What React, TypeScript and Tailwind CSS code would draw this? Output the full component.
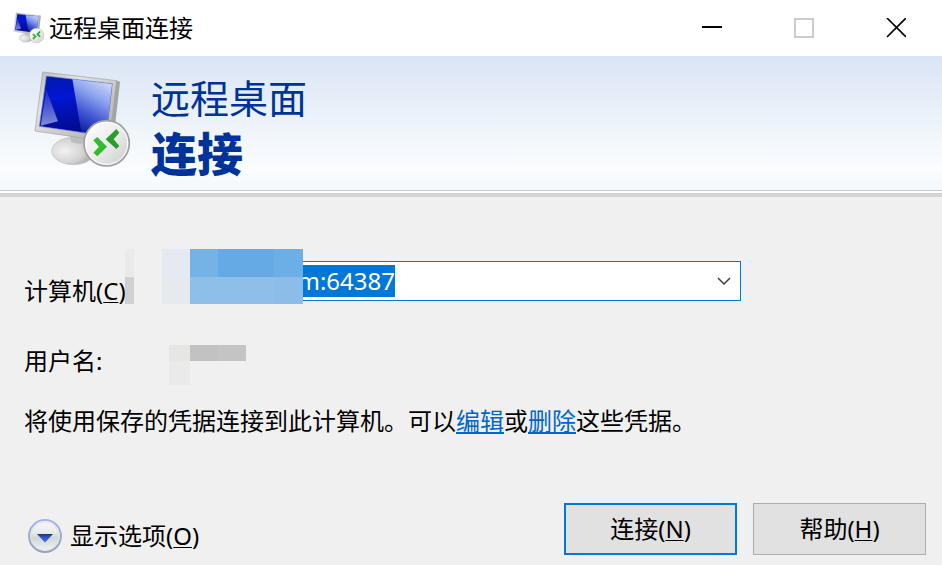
import React from 'react';

interface MosaicProps {
  className: string;
  cells: string[];
}

// Censor blocks, laid out on a grid given by the caller
const Mosaic: React.FC<MosaicProps> = ({ className, cells }) => (
  <div aria-hidden="true" className={`grid ${className}`}>
    {cells.map((cell, i) => (
      <span key={i} className={cell}></span>
    ))}
  </div>
);

const RemoteDesktopIcon: React.FC<{ id: string; className: string }> = ({ id, className }) => (
  <svg viewBox="39 30 300 300" className={className} aria-hidden="true">
    <defs>
      <linearGradient id={`${id}-frame`} x1="0" y1="0" x2="1" y2="1">
        <stop offset="0" stopColor="#b9b9b9" />
        <stop offset="0.3" stopColor="#e2e2e2" />
        <stop offset="1" stopColor="#a8a8a8" />
      </linearGradient>
      <linearGradient id={`${id}-screen`} x1="0" y1="0" x2="0.2" y2="1">
        <stop offset="0" stopColor="#0418a8" />
        <stop offset="0.4" stopColor="#0316d2" />
        <stop offset="1" stopColor="#020a88" />
      </linearGradient>
      <linearGradient id={`${id}-shine`} x1="0.8" y1="0" x2="0.4" y2="1">
        <stop offset="0" stopColor="#d0dcfa" />
        <stop offset="0.35" stopColor="#8ba1ee" />
        <stop offset="0.7" stopColor="#3b52d0" />
        <stop offset="1" stopColor="#0c1ca6" />
      </linearGradient>
      <linearGradient id={`${id}-corner`} x1="0" y1="0" x2="0" y2="1">
        <stop offset="0" stopColor="#1c2cc4" />
        <stop offset="1" stopColor="#7f8ada" />
      </linearGradient>
      <radialGradient id={`${id}-base`} cx="0.3" cy="0.5" r="0.7">
        <stop offset="0" stopColor="#f2f2f2" />
        <stop offset="0.6" stopColor="#d4d4d4" />
        <stop offset="1" stopColor="#a4a4a4" />
      </radialGradient>
      <linearGradient id={`${id}-badge`} x1="0" y1="0" x2="1" y2="1">
        <stop offset="0" stopColor="#ffffff" />
        <stop offset="0.5" stopColor="#ececec" />
        <stop offset="1" stopColor="#cacaca" />
      </linearGradient>
    </defs>
    <ellipse cx="160" cy="273" rx="65" ry="41" fill={`url(#${id}-base)`} stroke="#c2c2c2" strokeWidth="2" />
    <path d="M150 228 L154 246 Q174 254 196 250 L196 236 Z" fill="#bdbdbd" />
    <path d="M286 61 L300 65 L284 206 L266 206 Z" fill="#a3a3a3" />
    <path d="M68 36 L290 62 L268 246 L45 213 Z" fill={`url(#${id}-frame)`} stroke="#a0a0a0" strokeWidth="2" strokeLinejoin="round" />
    <path d="M79 48 L277 71 L259 228 L58 199 Z" fill={`url(#${id}-screen)`} />
    <path d="M157 57 L277 71 L259 228 L184 217 Z" fill={`url(#${id}-shine)`} />
    <path d="M79 90 L114 184 L62 197 Z" fill={`url(#${id}-corner)`} />
    <path d="M79 48 L277 71 L259 228 L58 199 Z" fill="none" stroke="#7c8cd0" strokeWidth="2" />
    <circle cx="260" cy="250" r="68" fill={`url(#${id}-badge)`} stroke="#a0a0a0" strokeWidth="5" />
    <circle cx="260" cy="250" r="63" fill="none" stroke="#ffffff" strokeWidth="3" />
    <path d="M220 241 L232 231 L261 260 L232 289 L220 278 L237 260 Z" fill="#31bc2b" />
    <path d="M289 207 L298 218 L281 238 L298 258 L289 267 L257 238 Z" fill="#2a9c2d" />
  </svg>
);

const ExpandIcon: React.FC = () => (
  <svg viewBox="0 0 34 34" className="size-[34px]" aria-hidden="true">
    <defs>
      <linearGradient id="expand-fill" x1="0" y1="0" x2="0" y2="1">
        <stop offset="0" stopColor="#fbfcfb" />
        <stop offset="0.4" stopColor="#e6eae8" />
        <stop offset="0.55" stopColor="#cfd6d3" />
        <stop offset="1" stopColor="#f4f8f6" />
      </linearGradient>
      <linearGradient id="expand-ring" x1="0" y1="0" x2="0" y2="1">
        <stop offset="0" stopColor="#a9b4ee" />
        <stop offset="1" stopColor="#98a4bc" />
      </linearGradient>
      <linearGradient id="expand-arrow" x1="0" y1="0" x2="0" y2="1">
        <stop offset="0" stopColor="#1c3070" />
        <stop offset="0.35" stopColor="#2f50c0" />
        <stop offset="1" stopColor="#4f70f0" />
      </linearGradient>
    </defs>
    <circle cx="17" cy="17" r="16" fill="url(#expand-fill)" stroke="url(#expand-ring)" strokeWidth="2" />
    <circle cx="17" cy="17" r="14" fill="none" stroke="#dfe5e6" strokeWidth="1" />
    <path d="M9 15 H25 L17 23.5 Z" fill="url(#expand-arrow)" />
  </svg>
);

const AccessKey: React.FC<{ letter: string }> = ({ letter }) => (
  <>
    (<span className="underline decoration-1 underline-offset-2">{letter}</span>)
  </>
);

const TitleBar: React.FC = () => (
  <header className="flex h-14 items-center bg-white pl-[13px]">
    <RemoteDesktopIcon id="small" className="size-8" />
    <h1 className="ml-1 flex-1 truncate">远程桌面连接</h1>
    <button aria-label="最小化" className="flex h-full w-[92px] items-center justify-center">
      <svg viewBox="0 0 20 20" className="size-5" shapeRendering="crispEdges">
        <path d="M0 9H20" stroke="#000" strokeWidth="2" />
      </svg>
    </button>
    <button aria-label="最大化" disabled className="flex h-full w-[92px] items-center justify-center">
      <svg viewBox="0 0 20 20" className="size-5" shapeRendering="crispEdges">
        <rect x="1" y="1" width="18" height="18" fill="none" stroke="#ccc" strokeWidth="2" />
      </svg>
    </button>
    <button aria-label="关闭" className="flex h-full w-[92px] items-center justify-center">
      <svg viewBox="0 0 20 20" className="size-5">
        <path d="M1 0L20 19M20 0L1 19" stroke="#000" strokeWidth="1.7" />
      </svg>
    </button>
  </header>
);

const Banner: React.FC = () => (
  <div className="border-b border-[#c8c8c8]">
    <div className="flex h-[134px] items-start bg-linear-to-b from-[#dae5f4] via-[#fbfdfe] via-85% to-[#f3f8fc] pt-[14px] pl-[33px] text-[#003399]">
      <RemoteDesktopIcon id="large" className="size-[100px]" />
      <p className="ml-[18px]">
        <span className="block text-[39px] leading-[56px]">远程桌面</span>
        <span className="block text-[46px] leading-[54px] font-black">连接</span>
      </p>
    </div>
  </div>
);

const App: React.FC = () => {
  return (
    <div className="flex min-h-screen flex-col bg-[#f0f0f0] font-['Noto_Sans','Noto_Sans_CJK_SC',sans-serif] text-2xl leading-8 text-black">
      <TitleBar />
      <Banner />
      <div className="h-[6px] border-t-2 border-white bg-[#d4d4d4]"></div>

      <form className="flex flex-1 flex-col px-6 pt-16" onSubmit={(e) => e.preventDefault()}>
        <div className="relative flex items-start">
          <label htmlFor="computer" className="w-[138px] shrink-0 pt-[14px]">
            计算机<AccessKey letter="C" />
          </label>
          <div className="flex h-10 w-[579px] items-center border border-[#0078d7] bg-white">
            <input
              id="computer"
              type="text"
              defaultValue="m:64387"
              className="h-8 w-[232px] bg-[#0078d7] text-right text-white outline-none"
            />
            <button type="button" aria-label="展开列表" className="ml-auto flex h-full w-8 items-center justify-center">
              <svg viewBox="0 0 14 8" className="h-2 w-[14px]" fill="none">
                <path d="M1 1L7 7L13 1" stroke="#404040" strokeWidth="1.5" />
              </svg>
            </button>
          </div>
          <Mosaic
            className="absolute -top-3 left-[101px] w-[9px] grid-rows-[28px_27px]"
            cells={['bg-[#eaeaea]', 'bg-[#d0d1d3]']}
          />
          <Mosaic
            className="absolute -top-3 left-[138px] grid-cols-[28px_28px_28px_28px_29px] grid-rows-[28px_27px]"
            cells={[
              'bg-[#e4e9f2]', 'bg-[#75b2e6]', 'bg-[#66aae5]', 'bg-[#66aae5]', 'bg-[#6caee6]',
              'bg-[#e6eaee]', 'bg-[#8ebfe9]', 'bg-[#8ebfe9]', 'bg-[#8fbee8]', 'bg-[#8cbde8]',
            ]}
          />
        </div>

        <div className="mt-[38px] flex items-start">
          <span className="w-[145px] shrink-0">用户名:</span>
          <Mosaic
            className="grid-cols-[21px_28px_28px] grid-rows-[16px_24px]"
            cells={['bg-[#e6e6e4]', 'bg-[#c2c2c2]', 'bg-[#c4c4c4]', 'bg-[#eaeaea]']}
          />
        </div>

        <p className="mt-5">
          将使用保存的凭据连接到此计算机。可以
          <a href="#edit" className="text-[#0066cc] underline decoration-2 underline-offset-2">编辑</a>或
          <a href="#delete" className="text-[#0066cc] underline decoration-2 underline-offset-2">删除</a>这些凭据。
        </p>

        <div className="-mr-2 mt-auto flex items-center gap-4 pt-6 pb-[10px]">
          <button type="button" className="mr-auto ml-1 flex items-center gap-2 pt-[14px]">
            <ExpandIcon />
            <span>显示选项<AccessKey letter="O" /></span>
          </button>
          <button type="submit" className="h-[52px] w-[173px] border-2 border-[#0078d7] bg-[#e1e1e1]">
            连接<AccessKey letter="N" />
          </button>
          <button type="button" className="h-[52px] w-[173px] border border-[#adadad] bg-[#e1e1e1]">
            帮助<AccessKey letter="H" />
          </button>
        </div>
      </form>
    </div>
  );
};

export default App;
